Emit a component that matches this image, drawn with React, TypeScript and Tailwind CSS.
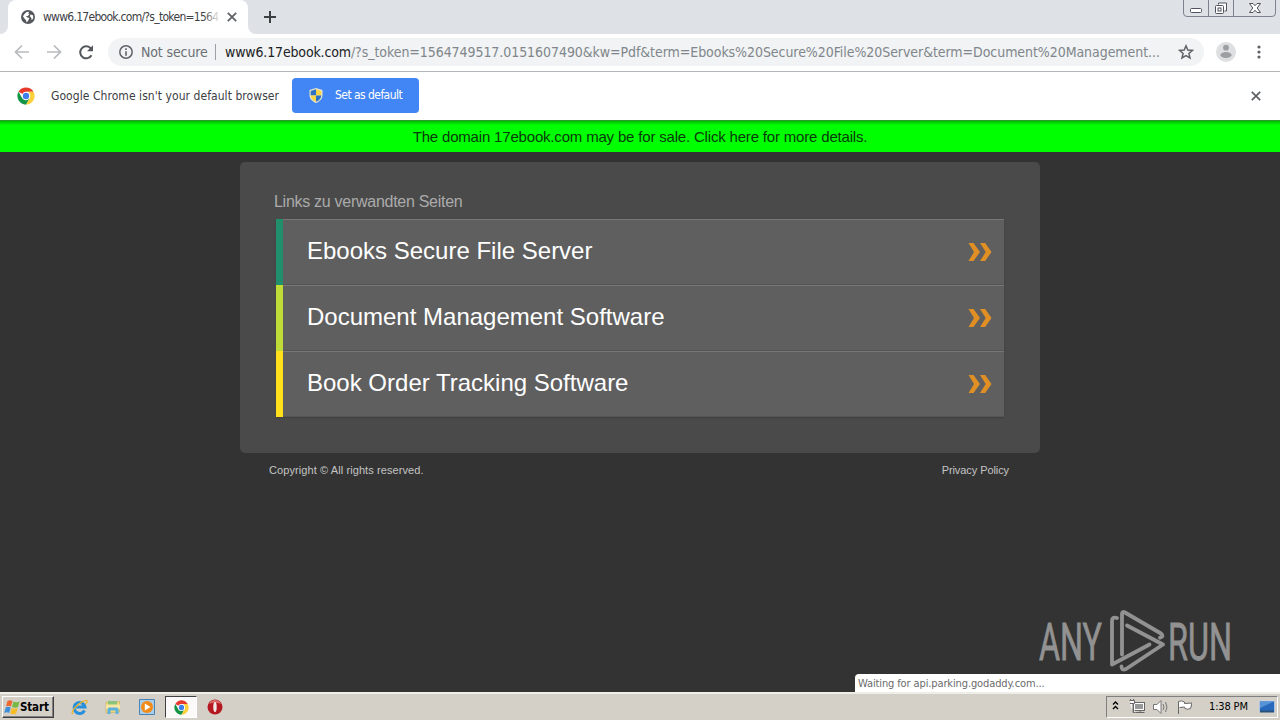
import type { ReactNode } from "react";

const links = [
  { label: "Ebooks Secure File Server", bar: "bg-[#228f6c]" },
  { label: "Document Management Software", bar: "bg-[#bfdb38]" },
  { label: "Book Order Tracking Software", bar: "bg-[#ffe01b]" },
];

function ChromeLogo({ size }: { size: number }) {
  return (
    <svg width={size} height={size} viewBox="0 0 48 48" className="block">
      <circle cx="24" cy="24" r="23" fill="#fff" />
      <path d="M24 24 4.1 12.5A23 23 0 0 1 43.9 12.5H24Z" fill="#e8392d" />
      <path d="M4.1 12.5A23 23 0 0 0 24 47L34 29.7 24 24 14 29.7Z" fill="#159447" />
      <path d="M43.9 12.5A23 23 0 0 1 24 47L34 29.7 31 14V12.5Z" fill="#fdd03b" />
      <circle cx="24" cy="24" r="11.5" fill="#fff" />
      <circle cx="24" cy="24" r="8.5" fill="#3f7fec" />
    </svg>
  );
}

function CloseIcon() {
  return (
    <svg width="10" height="10" viewBox="0 0 10 10" className="block" fill="none" stroke="#5f6368" strokeWidth="1.8">
      <path d="M.8.8 9.2 9.2M9.2.8.8 9.2" />
    </svg>
  );
}

function TabStrip() {
  return (
    <div className="flex h-[34px] items-start bg-[#dee1e6]">
      <svg width="8" height="34" viewBox="0 0 8 34" className="block shrink-0">
        <path d="M0 34a8 8 0 0 0 8-8v8Z" fill="#fff" />
      </svg>
      <div className="flex h-[34px] w-[240px] shrink-0 items-center rounded-t-[8px] bg-white pl-[13px]">
        <svg width="14" height="14" viewBox="0 0 14 14" className="block shrink-0">
          <circle cx="7" cy="7" r="7" fill="#54585d" />
          <path d="M2 6.4 3 4.5 5.5 2 8.2 1.8 7.3 3.4 8.5 4.6 6.6 6 4.8 6.2 6.4 7.6 8.2 8.1 7.6 10 5.7 12.4 5 10.2 3.4 8.6Z" fill="#fff" />
          <path d="M9.6 4.6 12 5.3 12.3 8 10.8 10.2 10.2 7.8 8.8 6.3Z" fill="#fff" />
        </svg>
        <div className="relative ml-[8px] h-[16px] w-[178px] whitespace-nowrap text-[12px] leading-[16px] tracking-[-0.72px] text-[#3c4043]">
          www6.17ebook.com/?s_token=1564
          <div className="absolute inset-y-0 right-0 w-[18px] bg-gradient-to-r from-white/0 to-white" />
        </div>
        <div className="ml-[6px]">
          <CloseIcon />
        </div>
      </div>
      <svg width="8" height="34" viewBox="0 0 8 34" className="block shrink-0">
        <path d="M8 34a8 8 0 0 1-8-8v8Z" fill="#fff" />
      </svg>
      <svg width="12" height="12" viewBox="0 0 12 12" className="ml-[8px] mt-[11px] block" stroke="#3c4043" strokeWidth="2">
        <path d="M6 0v12M0 6h12" />
      </svg>
      <svg width="94" height="18" viewBox="0 0 94 18" className="ml-auto mr-[3px] block" fill="none" stroke="#7d828e">
        <path d="M.5 0v13a3.5 3.5 0 0 0 3.5 3.5h85a3.5 3.5 0 0 0 3.5-3.5V0M25.5 0v16.500M50.500 0v16.500" />
        <rect x="7.500" y="8.500" width="11" height="4" rx="1" fill="#fff" stroke="#50535d" />
        <g stroke="#50535d">
          <path d="M35.500 4.500v-1.500h8v8h-2" fill="#fff" />
          <rect x="32.500" y="5.500" width="8" height="8" rx="1" fill="#fff" />
          <rect x="35" y="8" width="3" height="3" />
        </g>
        <path d="M66.500 3.500h3.500l2 2.200 2-2.200h3.500L74.200 8l3.300 4.500H74l-2-2.300-2 2.300h-3.500L69.800 8Z" fill="#fff" stroke="#50535d" />
      </svg>
    </div>
  );
}

function Toolbar() {
  return (
    <div className="flex h-[38px] items-center border-b border-[#b4b5b9] bg-white pb-px">
      <svg width="96" height="28" viewBox="0 0 96 28" className="block shrink-0" fill="none" strokeWidth="1.7">
        <path d="M29 14H16M22 7.500 15.500 14l6.500 6.500M47 14h13M54 7.500l6.500 6.500-6.500 6.500" stroke="#b8babd" />
        <path d="M91.500 17.200A6 6 0 1 1 90.400 10l1.400 1.500" stroke="#54585d" strokeWidth="2" />
        <path d="M93 7.200v6h-6Z" fill="#54585d" />
      </svg>
      <div className="ml-[12px] flex h-[28px] w-[1096px] shrink-0 items-center rounded-full bg-[#f1f3f4] pl-[11px] text-[14px]">
        <svg width="14" height="14" viewBox="0 0 14 14" className="block shrink-0">
          <circle cx="7" cy="7" r="6.200" fill="none" stroke="#5f6368" strokeWidth="1.500" />
          <path d="M6.200 3.300h1.600v1.600H6.200ZM6.200 6.200h1.600v4.500H6.200Z" fill="#5f6368" />
        </svg>
        <span className="ml-[8px] w-[66px] whitespace-nowrap tracking-[-0.13px] text-[#6b6f74]">Not secure</span>
        <span className="ml-[8px] h-[16px] w-px bg-[#9aa0a6]" />
        <span className="ml-[9px] w-[940px] whitespace-nowrap tracking-[-0.06px] text-[#80868b]">
          <span className="tracking-[-0.15px] text-[#202124]">www6.17ebook.com</span>
          /?s_token=1564749517.0151607490&kw=Pdf&term=Ebooks%20Secure%20File%20Server&term=Document%20Management...
        </span>
        <svg width="16" height="16" viewBox="0 0 16 16" className="ml-[13px] block shrink-0" fill="none" stroke="#5f6368" strokeWidth="1.500">
          <path d="m8 1.800 1.800 4.200 4.600.4-3.500 3 1.100 4.500L8 11.500l-4 2.400 1.100-4.500-3.500-3L6.200 6Z" />
        </svg>
      </div>
      <svg width="20" height="20" viewBox="0 0 20 20" className="ml-[12px] block shrink-0">
        <circle cx="10" cy="10" r="10" fill="#dedfe1" />
        <circle cx="10" cy="5.700" r="2.900" fill="#9b9ea2" />
        <ellipse cx="10" cy="13" rx="5.700" ry="2.900" fill="#9b9ea2" />
      </svg>
      <svg width="4" height="14" viewBox="0 0 4 14" className="ml-[21px] block shrink-0" fill="#5f6368">
        <circle cx="2" cy="2" r="1.600" />
        <circle cx="2" cy="7" r="1.600" />
        <circle cx="2" cy="12" r="1.600" />
      </svg>
    </div>
  );
}

function InfoBar() {
  return (
    <div className="flex h-[48px] items-center bg-white pl-[17px] pr-[19px]">
      <ChromeLogo size={18} />
      <span className="ml-[16px] w-[241px] whitespace-nowrap text-[12px] tracking-[0.06px] text-[#3c4043]">
        Google Chrome isn't your default browser
      </span>
      <button className="mb-[2px] flex h-[35px] w-[127px] items-center rounded-[4px] bg-[#4285f4] pl-[17px] text-[12px] text-white">
        <svg width="14" height="15" viewBox="0 0 14 15" className="block">
          <path d="M7 0 13.500 2v5c0 4-3 6.500-6.500 8C3.500 13.500.5 11 .5 7V2Z" fill="#e8e6cf" />
          <path d="M7 1.300V7.500H1.700V3Z" fill="#2d72c4" />
          <path d="M7 1.300V7.500h5.300V3Z" fill="#f9d54a" />
          <path d="M7 7.500H1.700c0 3 2.300 5 5.300 6.200Z" fill="#f9d54a" />
          <path d="M7 7.500h5.300c0 3-2.300 5-5.300 6.200Z" fill="#2d72c4" />
        </svg>
        <span className="ml-[12px] whitespace-nowrap tracking-[-0.55px]">Set as default</span>
      </button>
      <div className="ml-auto">
        <CloseIcon />
      </div>
    </div>
  );
}

function Watermark() {
  return (
    <svg width="210" height="76" viewBox="0 0 210 76" className="absolute bottom-[8px] right-[32px] block overflow-visible">
      <g fill="#929292" stroke="#929292" strokeWidth=".8" fontFamily="Roboto, sans-serif" fontSize="52">
        <text x="1" y="51.500" textLength="63" lengthAdjust="spacingAndGlyphs">ANY</text>
        <text x="130" y="51.500" textLength="64" lengthAdjust="spacingAndGlyphs">RUN</text>
      </g>
      <g fill="none" stroke="#929292" strokeWidth="3.800" strokeLinejoin="round" strokeLinecap="round">
        <path d="M79 10Q74 8.500 74 13V56.500L111.500 36.500" />
        <path d="M84 46.500V6Q84 3 87 4.500L123 25.500Q126.500 28.500 122 29.700" />
        <path d="M89 17.500 125 36.500 88 61Q83.500 63 83.500 58.500" />
      </g>
    </svg>
  );
}

function ParkedPage() {
  return (
    <div className="relative flex h-[572px] flex-col bg-[#333] font-['Liberation_Sans',sans-serif]">
      <div className="flex h-[32px] shrink-0 items-center justify-center border-t border-[#2a9a2a] bg-[#00ff00] bg-gradient-to-b from-[#00bb00] to-[#00ff00] to-[4px] text-[15px] tracking-[-0.18px] text-[#0a3a0a]">
        <span className="mt-px">The domain 17ebook.com may be for sale. Click here for more details.</span>
      </div>

      {/* Related links */}
      <div className="mx-auto mt-[10px] h-[291px] w-[800px] shrink-0 rounded-[5px] bg-[#4a4a4a] pl-[34px] pt-[30px]">
        <h1 className="h-[27px] text-[16px] leading-[20px] tracking-[-0.28px] text-[#aaa]">Links zu verwandten Seiten</h1>
        <div className="ml-[2px] w-[728px] shadow-[0_1px_2px_rgba(0,0,0,0.15)]">
          {links.map((link) => (
            <div key={link.label} className="flex h-[66px] bg-[#5f5f5f]">
              <div className={`w-[7px] ${link.bar}`} />
              <div className="flex flex-1 items-center justify-between border-t border-[#777] border-b border-b-[#555] pl-[24px] pr-[12px]">
                <span className="mb-[2px] whitespace-nowrap text-[24px] text-white">{link.label}</span>
                <svg width="24" height="20" viewBox="0 0 24 20" className="block" fill="#e08f24">
                  <path d="M.5 1h5L12 10l-6.500 9h-5L6 10ZM12 1h5.200L23.500 10l-6.300 9H12L17.700 10Z" />
                </svg>
              </div>
            </div>
          ))}
        </div>
      </div>

      <div className="mx-auto mt-[10px] flex w-[742px] justify-between pr-[2px] text-[11px] leading-[14px] text-[#c4c4c4]">
        <span className="tracking-[0.09px]">Copyright © All rights reserved.</span>
        <span className="tracking-[-0.08px]">Privacy Policy</span>
      </div>

      <Watermark />
      <div className="absolute bottom-0 right-0 h-[18px] w-[425px] rounded-tl-[4px] bg-white pl-[3px] font-['DejaVu_Sans_Condensed','DejaVu_Sans',sans-serif] text-[11px] leading-[19px] tracking-[-0.12px] text-[#6b6b6b]">
        Waiting for api.parking.godaddy.com...
      </div>
    </div>
  );
}

function Quick({ children }: { children: ReactNode }) {
  return <div className="flex h-[22px] w-[34px] items-center justify-center">{children}</div>;
}

function Taskbar() {
  return (
    <div className="flex h-[28px] items-center border-t-2 border-[#efede8] bg-[#d4d0c8] text-[11px] text-black">
      <div className="ml-[2px] flex h-[22px] w-[52px] items-center border border-b-[#404040] border-l-white border-r-[#404040] border-t-white pl-px shadow-[inset_-1px_-1px_#808080]">
        <svg width="17" height="16" viewBox="0 0 17 16" className="block shrink-0">
          <path d="M3.500 2Q6 .5 8.500 2L7 7.500Q4.500 6 2 7.500Z" fill="#ed672f" />
          <path d="M9.500 2.500Q12 4 15.500 2.500L14 8Q11.500 9.500 8 8Z" fill="#78b943" />
          <path d="M1.700 8.500Q4 7 6.700 8.500L5.200 14Q2.700 12.500.2 14Z" fill="#3e8fd9" />
          <path d="M7.700 9Q10.500 10.500 13.700 9L12.200 14.500Q9.500 16 6.200 14.500Z" fill="#f7bd28" />
        </svg>
        <span className="-ml-px mt-px whitespace-nowrap text-[11.5px] font-bold tracking-[-0.15px]">Start</span>
      </div>
      <div className="ml-[8px] flex">
        <Quick>
          <svg width="17" height="17" viewBox="0 0 17 17">
            <path d="M13.500 11.500A5.500 5.500 0 1 1 14 8H4" fill="none" stroke="#278fdb" strokeWidth="3" />
            <path d="M2 14.800C-1 14 5 6 11 2.800s6-.5 3.500 2.500" fill="none" stroke="#e9b531" strokeWidth="1.400" />
          </svg>
        </Quick>
        <Quick>
          <svg width="16" height="16" viewBox="0 0 16 16">
            <path d="M1 3.500 5 2l1 1.500 8.500-1V13L1 14Z" fill="#f3d878" stroke="#c4a956" strokeWidth=".6" />
            <path d="M3 2h9v4H3Z" fill="#89c47c" />
            <path d="M1 5.500h14V10H1Z" fill="#f8e6a2" />
            <path d="M2.500 15V10q0-1.500 2-1.500h7q2 0 2 1.500v5h-3v-3.500h-5V15Z" fill="#5bb2dc" />
          </svg>
        </Quick>
        <Quick>
          <svg width="16" height="16" viewBox="0 0 16 16">
            <path d="M.5.5h15v15H.5Z" fill="#abcde8" stroke="#4584b6" />
            <circle cx="8" cy="8" r="6" fill="#f28a18" />
            <path d="M5.800 4.500 11.500 8l-5.700 3.500Z" fill="#fff" />
          </svg>
        </Quick>
        <div className="mx-[1px] flex h-[22px] w-[32px] items-center justify-center border border-b-white border-l-[#404040] border-r-white border-t-[#404040] bg-[#fbfaf9]">
          <ChromeLogo size={15} />
        </div>
        <Quick>
          <svg width="16" height="16" viewBox="0 0 16 16">
            <circle cx="8" cy="8" r="7.500" fill="#b51820" />
            <path d="M2 5a6.500 6.500 0 0 1 12 0Q8 2 2 5Z" fill="#d96b6b" />
            <ellipse cx="8" cy="8" rx="1.700" ry="5" fill="#f5e9e7" />
          </svg>
        </Quick>
      </div>

      {/* Notification area */}
      <div className="ml-auto mr-[2px] flex h-[22px] w-[172px] items-center border border-b-white border-l-[#808080] border-r-white border-t-[#808080]">
        <svg width="80" height="18" viewBox="0 0 80 18" className="ml-[5px] block shrink-0" fill="none">
          <path d="M1 6.500 3.500 4 6 6.500M1 11 3.500 8.500 6 11" stroke="#000" strokeWidth="1.400" />
          <g stroke="#666" fill="#fff">
            <rect x="21.500" y="4.500" width="11" height="8" />
            <path d="M23 6h8v5h-8Z" fill="#999" stroke="none" />
            <path d="M23.500 14.500h9M28 12.500v2" />
            <path d="M17.500 2.500h5v3h-1v9h2M18.500 1v2M21.500 1v2M18 5.500h3v9" />
          </g>
          <path d="M41.500 6.500H45L49 2.500v13L45 11.500h-3.500Z" fill="#fff" stroke="#777" />
          <path d="M51 6q2 3 0 6M53.500 4q3 5 0 10" stroke="#777" />
          <path d="M66.500 16V3.500Q69.500 2 72.500 4V5.500l7.500-.5-1.500 5.500q-3 1.500-5.500 0l-.5-1.500-5 .5" fill="#fff" stroke="#666" />
        </svg>
        <span className="ml-[17px] mt-px w-[42px] whitespace-nowrap tracking-[-0.15px]">1:38 PM</span>
        <svg width="16" height="14" viewBox="0 0 16 14" className="ml-[8px] block shrink-0">
          <path d="M.5 1h15v10.500H.5Z" fill="#2868bd" stroke="#c0d5ee" strokeWidth=".7" />
          <path d="M1 1.500h14L1 8Z" fill="#78b0e7" opacity=".6" />
          <path d="M1 10.500h14v2H1Z" fill="#29527b" />
        </svg>
      </div>
    </div>
  );
}

export default function App() {
  return (
    <div className="h-[720px] w-[1280px] overflow-hidden bg-white font-['DejaVu_Sans_Condensed','DejaVu_Sans',sans-serif]">
      <TabStrip />
      <Toolbar />
      <InfoBar />
      <ParkedPage />
      <Taskbar />
    </div>
  );
}
